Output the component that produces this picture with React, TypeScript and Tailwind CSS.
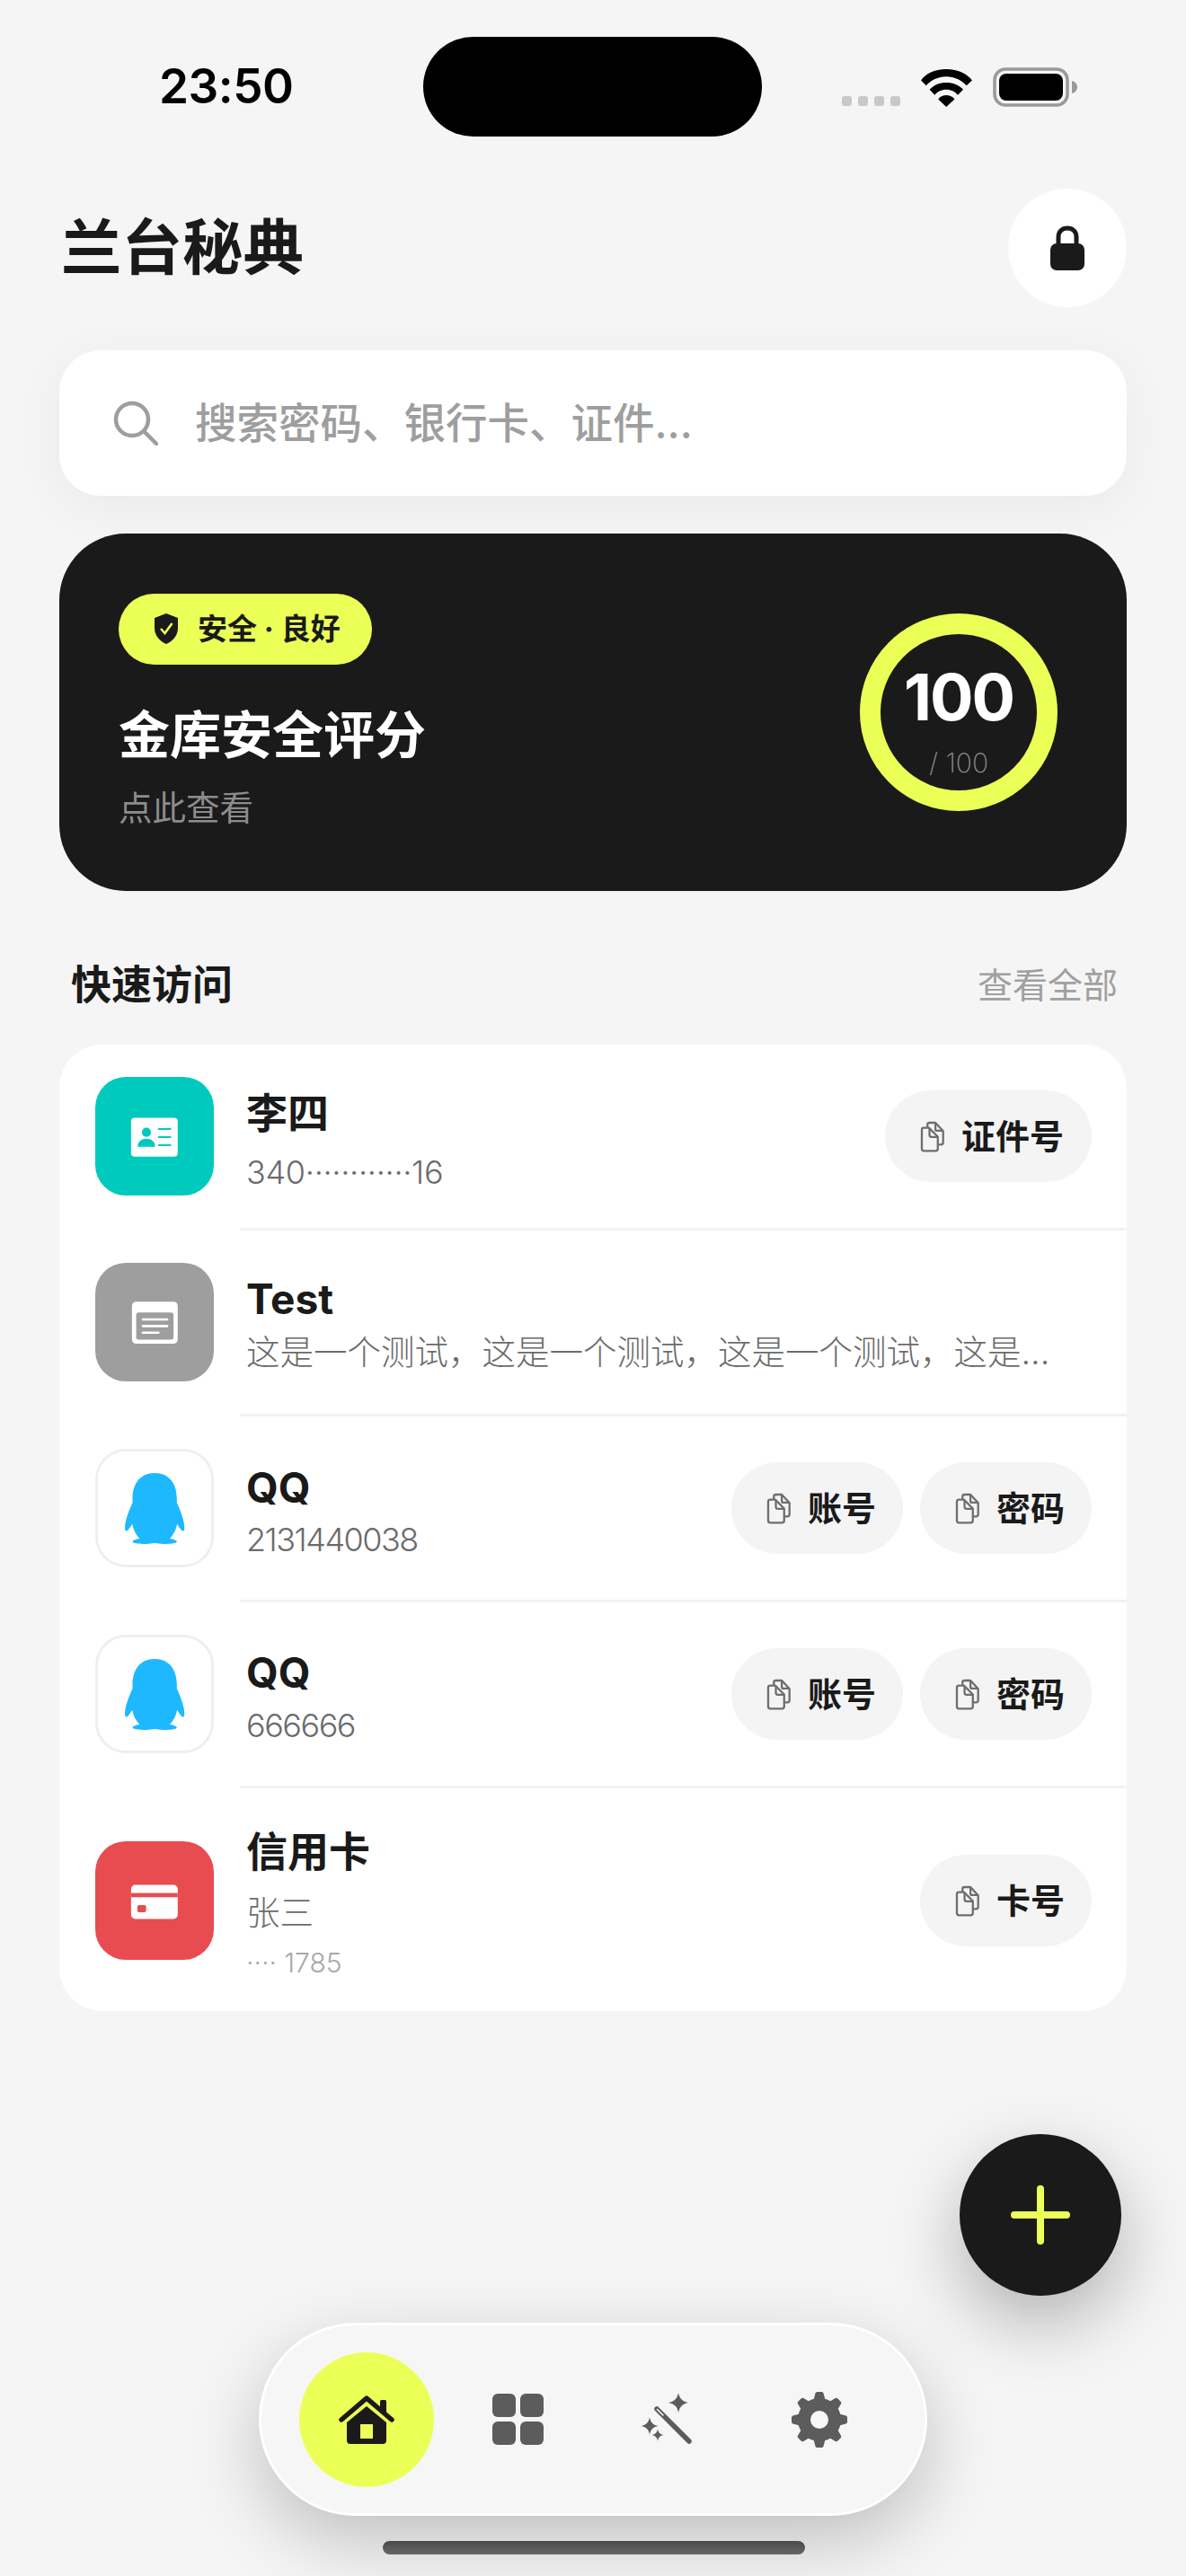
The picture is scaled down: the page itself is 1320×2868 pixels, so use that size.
import React from "react";

const LIME = "#EBFF57";

function Wifi() {
  return (
    <svg viewBox="375 105 172 127" className="w-[57px] h-[42px]" fill="#000">
      <path d="M460 105C500 105 530 120 547 143L528 160C512 143 488 130 460 130C432 130 408 143 392 160L375 143C390 120 420 105 460 105Z" />
      <path d="M460 150C483 150 503 158 517 174L499 192C490 181 476 174 460 174C444 174 430 181 421 192L404 174C418 158 437 150 460 150Z" />
      <path d="M460 193C470 193 480 197 488 206L460 232L433 206C441 197 450 193 460 193Z" />
    </svg>
  );
}

function Battery() {
  return (
    <svg viewBox="0 0 94 44" className="w-[94px] h-[44px]">
      <rect x="2" y="2" width="81" height="40" rx="12" fill="none" stroke="#999" strokeWidth="3.5" />
      <rect x="7" y="7" width="71" height="30" rx="8" fill="#000" />
      <path d="M88 15C92 16 94 19 94 22C94 25 92 28 88 29Z" fill="#999" />
    </svg>
  );
}

function Lock() {
  return (
    <svg viewBox="0 0 38 50" className="w-[38px] h-[50px]">
      <path d="M9 24V13C9 7 13 3 19 3C25 3 29 7 29 13V24" fill="none" stroke="#1a1a1a" strokeWidth="5" />
      <rect x="0" y="20" width="38" height="30" rx="7" fill="#1a1a1a" />
    </svg>
  );
}

function Search() {
  return (
    <svg viewBox="0 0 50 50" className="w-[50px] h-[50px]" fill="none" stroke="#9e9e9e" strokeWidth="4.5" strokeLinecap="round">
      <circle cx="21" cy="21" r="18" />
      <path d="M34 34L48 48" />
    </svg>
  );
}

function Shield() {
  return (
    <svg viewBox="0 0 28 34" className="w-[28px] h-[34px]">
      <path d="M14 0L27 5V16C27 25 21 31 14 34C7 31 1 25 1 16V5Z" fill="#1a1a1a" />
      <path d="M8 17L12.5 22L20.5 11" fill="none" stroke={LIME} strokeWidth="2.6" />
    </svg>
  );
}

function Copy() {
  return (
    <svg viewBox="670 205 82 104" className="w-[27px] h-[35px] shrink-0" fill="none" stroke="#6e6e6e" strokeWidth="7" strokeLinejoin="round">
      <path d="M683 227H700L730 257V298Q730 305 723 305H683Q676 305 676 298V234Q676 227 683 227Z" />
      <path d="M702 230V252Q702 258 708 258H728" />
      <path d="M695 227V217Q695 210 702 210H722L748 238V277Q748 284 741 284H732" />
      <path d="M722 212V232Q722 237 727 237H746" />
    </svg>
  );
}

function IdIcon() {
  return (
    <svg viewBox="46 57 394 394" className="w-full h-full">
      <rect x="165" y="193" width="155" height="129" rx="12" fill="#fff" />
      <circle cx="216" cy="241" r="15" fill="#00C9BE" />
      <path d="M187 289C187 272 200 262 216 262C232 262 245 272 245 289Z" fill="#00C9BE" />
      <path d="M255 230H298M255 257H298M255 284H298" stroke="#00C9BE" strokeWidth="6" />
    </svg>
  );
}

function NoteIcon() {
  return (
    <svg viewBox="46 48 394 394" className="w-full h-full">
      <rect x="168" y="177" width="152" height="140" rx="14" fill="#fff" />
      <rect x="182" y="213" width="124" height="90" rx="8" fill="#9E9E9E" />
      <path d="M204 236H285M204 258H285M204 280H256" stroke="#fff" strokeWidth="8" strokeLinecap="round" />
    </svg>
  );
}

function CardIcon() {
  return (
    <svg viewBox="46 60 394 394" className="w-full h-full">
      <rect x="165" y="205" width="155" height="113" rx="14" fill="#fff" />
      <rect x="165" y="232" width="155" height="14" fill="#E84C50" />
      <rect x="186" y="272" width="29" height="24" rx="6" fill="#E84C50" />
    </svg>
  );
}

function Penguin() {
  return (
    <svg viewBox="47 40 391 391" className="w-[132px] h-[132px] -m-[3px] max-w-none">
      <path
        fill="#1EB8FF"
        d="M243 120C195 120 170 155 170 205L170 218C160 240 143 280 145 305C146 312 150 312 153 310C160 303 165 295 169 288C172 305 180 322 193 336C180 338 170 342 170 346C170 352 190 354 215 354C225 354 235 351 243 351C251 351 261 354 271 354C296 354 316 352 316 346C316 342 306 338 293 336C306 322 314 305 317 288C321 295 326 303 333 310C336 312 340 312 341 305C343 280 326 240 316 218L316 205C316 155 291 120 243 120Z"
      />
    </svg>
  );
}

function HomeIcon() {
  return (
    <svg viewBox="0 0 62 54" className="w-[62px] h-[54px]">
      <rect x="46" y="5" width="7" height="14" rx="1.5" fill="#1a1a1a" />
      <path d="M3 27L31 3L59 27" fill="none" stroke="#1a1a1a" strokeWidth="5.5" strokeLinecap="round" strokeLinejoin="round" />
      <path d="M31 12L53 30V50Q53 54 49 54H13Q9 54 9 50V30Z" fill="#1a1a1a" />
      <rect x="24" y="32" width="14" height="16" fill={LIME} />
    </svg>
  );
}

function GridIcon() {
  return (
    <svg viewBox="0 0 57 57" className="w-[57px] h-[57px]" fill="#5c5c5c">
      <rect x="0" y="0" width="26" height="26" rx="6" />
      <rect x="31" y="0" width="26" height="26" rx="6" />
      <rect x="0" y="31" width="26" height="26" rx="6" />
      <rect x="31" y="31" width="26" height="26" rx="6" />
    </svg>
  );
}

function star(cx: number, cy: number, r: number) {
  const k = r * 0.14;
  return `M${cx} ${cy - r}Q${cx + k} ${cy - k} ${cx + r} ${cy}Q${cx + k} ${cy + k} ${cx} ${cy + r}Q${cx - k} ${cy + k} ${cx - r} ${cy}Q${cx - k} ${cy - k} ${cx} ${cy - r}Z`;
}

function WandIcon() {
  return (
    <svg viewBox="0 0 57 57" className="w-[57px] h-[57px]">
      <path d={star(41, 10, 11)} fill="#5c5c5c" />
      <path d={star(9, 36, 9.5)} fill="#5c5c5c" />
      <path d={star(18, 46, 6.5)} fill="#5c5c5c" />
      <path d="M17 17L53 53" stroke="#5c5c5c" strokeWidth="5.5" strokeLinecap="round" />
      <path d="M17.5 17.5L24 24" stroke="#f6f6f6" strokeWidth="1.6" strokeLinecap="round" />
    </svg>
  );
}

function GearIcon() {
  const angles = [0, 45, 90, 135, 180, 225, 270, 315];
  return (
    <svg viewBox="0 0 62 62" className="w-[62px] h-[62px]">
      <circle cx="31" cy="31" r="17" fill="none" stroke="#5c5c5c" strokeWidth="14" />
      {angles.map((a) => (
        <path
          key={a}
          transform={`translate(31 31) rotate(${a})`}
          d="M-7 -20L-4.5 -29.5Q-4 -31 -2.5 -31H2.5Q4 -31 4.5 -29.5L7 -20Z"
          fill="#5c5c5c"
        />
      ))}
    </svg>
  );
}

function Chip({ label, wide }: { label: string; wide?: boolean }) {
  return (
    <div className={`h-[102px] rounded-full bg-[#f4f4f4] flex items-center gap-[19px] pl-[39px] ${wide ? "w-[230px]" : "w-[191px]"}`}>
      <Copy />
      <span className="text-[38px] font-semibold text-[#1a1a1a] leading-none whitespace-nowrap">{label}</span>
    </div>
  );
}

function Row({
  icon,
  iconClass,
  name,
  sub,
  subClass,
  gapClass,
  textClass,
  extra,
  chips,
  last,
}: {
  icon: React.ReactNode;
  iconClass: string;
  name: string;
  sub: string;
  subClass: string;
  gapClass: string;
  textClass: string;
  extra?: string;
  chips?: React.ReactNode;
  last?: boolean;
}) {
  return (
    <>
      <div className={`flex items-center pl-[40px] pr-[39px] ${last ? "h-[248px] pt-[2px]" : "h-[204px]"}`}>
        <div className={`w-[132px] h-[132px] rounded-[34px] shrink-0 overflow-hidden ${iconClass}`}>{icon}</div>
        <div className={`ml-[36px] flex-1 min-w-0 ${textClass}`}>
          <div className="text-[46px] font-bold text-[#1a1a1a] leading-[60px]">{name}</div>
          <div className={`font-light text-[#6b6b6b] leading-[46px] whitespace-nowrap ${gapClass} ${subClass}`}>{sub}</div>
          {extra && <div className="text-[30px] font-light text-[#a8a8a8] leading-[40px] mt-[12px]">{extra}</div>}
        </div>
        {chips && <div className="flex gap-[19px] shrink-0">{chips}</div>}
      </div>
      {!last && <div className="ml-[201px] h-[3px] bg-[#f2f2f2]" />}
    </>
  );
}

export default function App() {
  return (
    <div className="relative w-[1320px] h-[2868px] overflow-hidden bg-[#f5f5f5] font-['Inter','Noto_Sans_CJK_SC',sans-serif]">
      {/* status bar */}
      <div className="flex items-start h-[210px] pt-[41px]">
        <div className="ml-[177px] w-[294px] mt-[30px] text-[53px] font-semibold leading-[50px] tracking-[-0.5px] text-black">23:50</div>
        <div className="w-[377px] h-[111px] rounded-full bg-black" />
        <div className="ml-[89px] mt-[34px] flex items-end">
          <div className="flex gap-[7px] mb-[1px]">
            <div className="w-[11px] h-[11px] rounded-[3px] bg-[#c8c8c8]" />
            <div className="w-[11px] h-[11px] rounded-[3px] bg-[#c8c8c8]" />
            <div className="w-[11px] h-[11px] rounded-[3px] bg-[#c8c8c8]" />
            <div className="w-[11px] h-[11px] rounded-[3px] bg-[#c8c8c8]" />
          </div>
          <div className="ml-[23px]"><Wifi /></div>
          <div className="ml-[23px]"><Battery /></div>
        </div>
      </div>

      <div className="px-[66px]">
        {/* header */}
        <div className="flex items-center justify-between h-[132px]">
          <h1 className="ml-[2px] text-[67.5px] font-bold text-[#1a1a1a] leading-none">兰台秘典</h1>
          <div className="w-[132px] h-[132px] rounded-full bg-white flex items-center justify-center">
            <Lock />
          </div>
        </div>

        {/* search */}
        <div className="mt-[48px] h-[162px] rounded-[46px] bg-white flex items-center pl-[60px] shadow-[0_12px_60px_rgba(0,0,0,0.05)]">
          <Search />
          <span className="ml-[41px] text-[46.5px] font-medium text-[#9e9e9e] leading-none">搜索密码、银行卡、证件...</span>
        </div>

        {/* score */}
        <div className="mt-[42px] h-[398px] rounded-[74px] bg-[#1a1a1a] flex items-center justify-between pl-[66px] pr-[77px]">
          <div className="flex flex-col items-start pb-[8px]">
            <div className="h-[79px] w-[282px] rounded-full bg-[#EBFF57] flex items-center pl-[39px] gap-[21px]">
              <Shield />
              <span className="text-[33px] font-bold text-[#1a1a1a] leading-none whitespace-nowrap">安全 · 良好</span>
            </div>
            <div className="mt-[51px] text-[57px] font-bold text-white leading-[56px]">金库安全评分</div>
            <div className="mt-[35px] text-[37.5px] font-normal text-[#8c8c8c] leading-[36px]">点此查看</div>
          </div>
          <div className="w-[220px] h-[220px] rounded-full border-[23px] border-[#EBFF57] flex flex-col items-center pt-[33px]">
            <div className="text-[72px] font-bold text-white leading-[74px] tracking-[-2px]">100</div>
            <div className="mt-[20px] text-[30px] font-extralight text-[#8a8a8a] leading-[32px]">/ 100</div>
          </div>
        </div>

        {/* section */}
        <div className="mt-[60px] h-[88px] flex items-center justify-between pl-[13px]">
          <span className="text-[45px] font-bold text-[#1a1a1a] leading-none">快速访问</span>
          <span className="mr-[10px] text-[39px] font-normal text-[#a0a0a0] leading-none">查看全部</span>
        </div>

        {/* list */}
        <div className="mt-[23px] rounded-[48px] bg-white overflow-hidden">
          <Row
            icon={<IdIcon />}
            iconClass="bg-[#00C9BE]"
            name="李四"
            sub="340············16"
            subClass="text-[36px] tracking-[-0.3px]"
            gapClass="mt-[13px]"
            textClass="pt-[6px]"
            chips={<Chip label="证件号" wide />}
          />
          <Row
            icon={<NoteIcon />}
            iconClass="bg-[#9E9E9E]"
            name="Test"
            sub="这是一个测试，这是一个测试，这是一个测试，这是..."
            subClass="text-[37.5px]"
            gapClass="mt-[7px]"
            textClass=""
          />
          <Row
            icon={<Penguin />}
            iconClass="bg-white border-[3px] border-[#efefef]"
            name="QQ"
            sub="2131440038"
            subClass="text-[36px] tracking-[-1.5px]"
            gapClass="mt-[5px]"
            textClass="pt-[4px]"
            chips={<><Chip label="账号" /><Chip label="密码" /></>}
          />
          <Row
            icon={<Penguin />}
            iconClass="bg-white border-[3px] border-[#efefef]"
            name="QQ"
            sub="666666"
            subClass="text-[36px] tracking-[-1.5px]"
            gapClass="mt-[6px]"
            textClass="pt-[4px]"
            chips={<><Chip label="账号" /><Chip label="密码" /></>}
          />
          <Row
            icon={<CardIcon />}
            iconClass="bg-[#E84C50]"
            name="信用卡"
            sub="张三"
            subClass="text-[37.5px]"
            gapClass="mt-[16px]"
            textClass="pt-[3px]"
            extra="···· 1785"
            chips={<Chip label="卡号" />}
            last
          />
        </div>
      </div>

      {/* fab */}
      <div className="absolute left-[1068px] top-[2376px] w-[180px] h-[180px] rounded-full bg-[#1a1a1a] flex items-center justify-center shadow-[0_30px_80px_rgba(0,0,0,0.28)]">
        <svg viewBox="0 0 66 66" className="w-[66px] h-[66px]" stroke="#EBFF57" strokeWidth="8" strokeLinecap="round">
          <path d="M33 4V62M4 33H62" />
        </svg>
      </div>

      {/* nav */}
      <div className="absolute left-[288px] top-[2586px] w-[744px] h-[215px] rounded-[108px] bg-[#f6f6f6] border-[3px] border-white flex items-center shadow-[0_28px_80px_rgba(0,0,0,0.22)]">
        <div className="ml-[42px] w-[150px] h-[150px] rounded-full bg-[#EBFF57] flex items-center justify-center">
          <HomeIcon />
        </div>
        <div className="ml-[65px]"><GridIcon /></div>
        <div className="ml-[109px]"><WandIcon /></div>
        <div className="ml-[110px]"><GearIcon /></div>
      </div>

      {/* home indicator */}
      <div className="absolute left-[426px] top-[2829px] w-[470px] h-[15px] rounded-full bg-linear-to-b from-[#4a4a4a] to-[#666666]" />
    </div>
  );
}
